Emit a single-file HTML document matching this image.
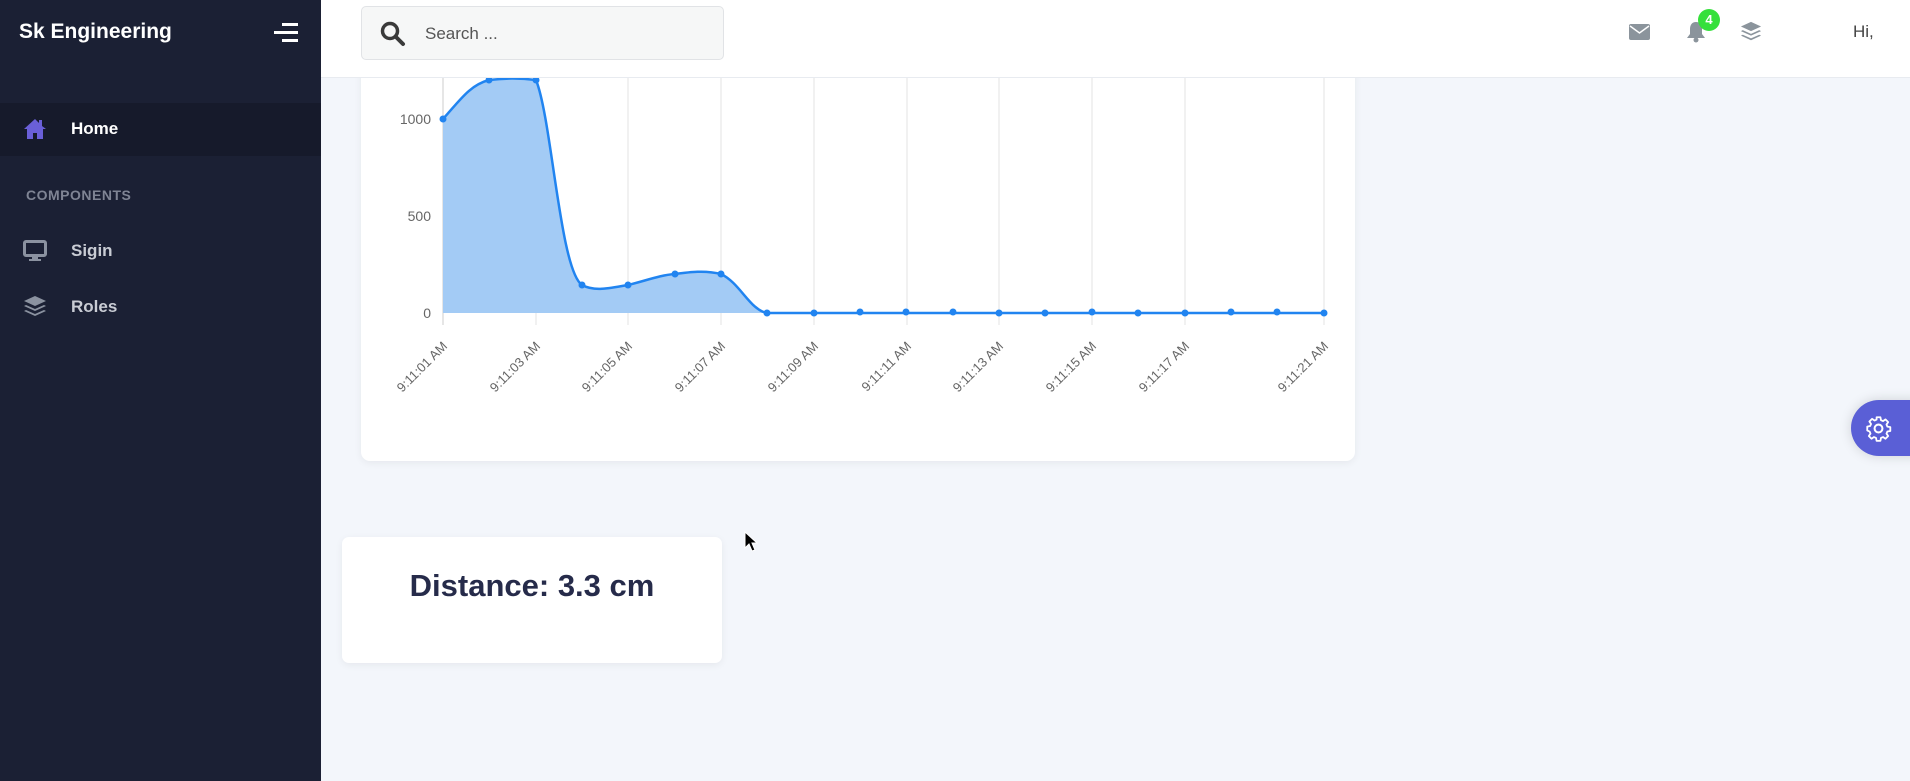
<!DOCTYPE html>
<html><head><meta charset="utf-8"><style>
*{margin:0;padding:0;box-sizing:border-box}
body{width:1910px;height:781px;overflow:hidden;background:#f3f6fb;font-family:"Liberation Sans",sans-serif;position:relative}
.side{position:absolute;left:0;top:0;width:321px;height:781px;background:#1b2034}
.brand{position:absolute;left:19px;top:20px;color:#fff;font-weight:bold;font-size:21px}
.home{position:absolute;left:0;top:103px;width:321px;height:53px;background:#161a2b}
.nav{position:absolute;left:71px;color:#fff;font-weight:bold;font-size:17px}
.nav2{color:#c9ccd4}
.comp{position:absolute;left:26px;top:187px;color:#7f8494;font-size:14px;font-weight:bold;letter-spacing:.5px}
.hdr{position:absolute;left:321px;top:0;width:1589px;height:78px;background:#fff;border-bottom:1px solid #e8ebf0}
.search{position:absolute;left:361px;top:6px;width:363px;height:54px;background:#f6f7f7;border:1px solid #e1e3e6;border-radius:5px}
.search span{position:absolute;left:63px;top:17px;font-size:17px;color:#555}
.card{position:absolute;left:361px;top:40px;width:994px;height:421px;background:#fff;border-radius:9px;box-shadow:0 2px 8px rgba(0,0,0,.06)}
.dist{position:absolute;left:342px;top:537px;width:380px;height:126px;background:#fff;border-radius:7px;box-shadow:0 2px 8px rgba(0,0,0,.06);text-align:center}
.dist div{margin-top:31px;font-size:31px;font-weight:bold;color:#262b4a}
.gear{position:absolute;left:1851px;top:400px;width:70px;height:56px;background:#5a5fd6;border-radius:28px 0 0 28px;box-shadow:0 0 12px rgba(0,0,0,.15)}
</style></head><body>
<div class="side">
<div class="brand">Sk Engineering</div>
<svg style="position:absolute;left:272px;top:22px" width="28" height="22"><rect x="10" y="1" width="16" height="3" fill="#fff"/><rect x="2" y="9" width="24" height="3" fill="#fff"/><rect x="10" y="17" width="16" height="3" fill="#fff"/></svg>
<div class="home"></div>
<svg style="position:absolute;left:23px;top:118px" width="24" height="22" viewBox="0 0 24 22"><path d="M12 1L1 11h3v10h6v-6h4v6h6V11h3L19 8V2h-3v3z" fill="#6a5fd8"/></svg>
<div class="nav" style="top:119px">Home</div>
<div class="comp">COMPONENTS</div>
<svg style="position:absolute;left:23px;top:240px" width="24" height="22" viewBox="0 0 24 22"><rect x="1.5" y="1.5" width="21" height="14" rx="1.5" fill="none" stroke="#8b92a0" stroke-width="3"/><rect x="9" y="16" width="6" height="3" fill="#8b92a0"/><rect x="6" y="19" width="12" height="2" fill="#8b92a0"/></svg>
<div class="nav nav2" style="top:241px">Sigin</div>
<svg style="position:absolute;left:23px;top:295px" width="24" height="24" viewBox="0 0 24 24"><path d="M12 1L1 6l11 5 11-5z" fill="#8b92a0"/><path d="M3 10l-2 1 11 5 11-5-2-1-9 4z" fill="#8b92a0"/><path d="M3 15l-2 1 11 5 11-5-2-1-9 4z" fill="#8b92a0"/></svg>
<div class="nav nav2" style="top:297px">Roles</div>
</div>
<div class="card">
<svg width="994" height="421" style="position:absolute;left:0;top:0" font-family="Liberation Sans,sans-serif">
<g transform="translate(-361,-40)">
<g stroke="#e3e3e3" stroke-width="1">
<line x1="536" y1="78" x2="536" y2="325"/><line x1="628" y1="78" x2="628" y2="325"/><line x1="721" y1="78" x2="721" y2="325"/><line x1="814" y1="78" x2="814" y2="325"/><line x1="907" y1="78" x2="907" y2="325"/><line x1="999" y1="78" x2="999" y2="325"/><line x1="1092" y1="78" x2="1092" y2="325"/><line x1="1185" y1="78" x2="1185" y2="325"/><line x1="1324" y1="78" x2="1324" y2="325"/>
<line x1="443" y1="78" x2="443" y2="325" stroke="#ccc"/>
</g>
<g font-size="14" fill="#666" text-anchor="end"><text x="431" y="124">1000</text><text x="431" y="221">500</text><text x="431" y="318">0</text></g>
<path d="M443,119 C460,100 470,85 489,80 C505,78 520,78 536,80 C552,120 560,270 582,285 C595,292 610,288 628,285 C645,281 660,275 675,274 C690,272 705,270 721,274 C740,283 750,310 767,313 L1324,313 L443,313Z" fill="#a3cbf5"/>
<path d="M443,119 C460,100 470,85 489,80 C505,78 520,78 536,80 C552,120 560,270 582,285 C595,292 610,288 628,285 C645,281 660,275 675,274 C690,272 705,270 721,274 C740,283 750,310 767,313 L1324,313" fill="none" stroke="#2184f0" stroke-width="2.5"/>
<g fill="#2184f0"><circle cx="443" cy="119" r="3.5"/><circle cx="489" cy="80" r="3.5"/><circle cx="536" cy="80" r="3.5"/><circle cx="582" cy="285" r="3.5"/><circle cx="628" cy="285" r="3.5"/><circle cx="675" cy="274" r="3.5"/><circle cx="721" cy="274" r="3.5"/><circle cx="767" cy="313" r="3.5"/><circle cx="814" cy="313" r="3.5"/><circle cx="860" cy="312" r="3.5"/><circle cx="906" cy="312" r="3.5"/><circle cx="953" cy="312" r="3.5"/><circle cx="999" cy="313" r="3.5"/><circle cx="1045" cy="313" r="3.5"/><circle cx="1092" cy="312" r="3.5"/><circle cx="1138" cy="313" r="3.5"/><circle cx="1185" cy="313" r="3.5"/><circle cx="1231" cy="312" r="3.5"/><circle cx="1277" cy="312" r="3.5"/><circle cx="1324" cy="313" r="3.5"/></g>
<g font-size="13" fill="#666" text-anchor="end">
<text transform="translate(448,347) rotate(-45)">9:11:01 AM</text>
<text transform="translate(541,347) rotate(-45)">9:11:03 AM</text>
<text transform="translate(633,347) rotate(-45)">9:11:05 AM</text>
<text transform="translate(726,347) rotate(-45)">9:11:07 AM</text>
<text transform="translate(819,347) rotate(-45)">9:11:09 AM</text>
<text transform="translate(912,347) rotate(-45)">9:11:11 AM</text>
<text transform="translate(1004,347) rotate(-45)">9:11:13 AM</text>
<text transform="translate(1097,347) rotate(-45)">9:11:15 AM</text>
<text transform="translate(1190,347) rotate(-45)">9:11:17 AM</text>
<text transform="translate(1329,347) rotate(-45)">9:11:21 AM</text>
</g></g></svg>
</div>
<div class="hdr"></div>
<div class="search">
<svg style="position:absolute;left:18px;top:14px" width="26" height="26" viewBox="0 0 26 26"><circle cx="10" cy="10" r="7.5" fill="none" stroke="#3a3a3a" stroke-width="3.5"/><path d="M15.5 15.5L23 23" stroke="#3a3a3a" stroke-width="4" stroke-linecap="round"/></svg>
<span>Search ...</span></div>
<svg style="position:absolute;left:1629px;top:24px" width="21" height="16" viewBox="0 0 21 16"><rect width="21" height="16" rx="2" fill="#8b949c"/><path d="M1 2l9.5 7L20 2" fill="none" stroke="#fff" stroke-width="1.5"/></svg>
<svg style="position:absolute;left:1686px;top:21px" width="20" height="22" viewBox="0 0 20 22"><path d="M10 1c-4 0-6 3-6 7v5l-3 4h18l-3-4V8c0-4-2-7-6-7z" fill="#8b949c"/><circle cx="10" cy="19" r="2.5" fill="#8b949c"/></svg>
<div style="position:absolute;left:1698px;top:9px;width:22px;height:22px;border-radius:50%;background:#35e03b;color:#fff;font-size:13px;font-weight:bold;text-align:center;line-height:22px">4</div>
<svg style="position:absolute;left:1740px;top:21px" width="22" height="22" viewBox="0 0 24 24"><path d="M12 1L1 6l11 5 11-5z" fill="#8b949c"/><path d="M3 10l-2 1 11 5 11-5-2-1-9 4z" fill="#8b949c"/><path d="M3 15l-2 1 11 5 11-5-2-1-9 4z" fill="#8b949c"/></svg>
<div style="position:absolute;left:1853px;top:22px;font-size:17px;color:#444">Hi,</div>
<div class="dist"><div>Distance: 3.3 cm</div></div>
<div class="gear"><svg style="position:absolute;left:14px;top:15px" width="27" height="27" viewBox="0 0 24 24"><path d="M10.3 2h3.4l.5 2.6 1.8.8 2.2-1.5 2.4 2.4-1.5 2.2.8 1.8 2.6.5v3.4l-2.6.5-.8 1.8 1.5 2.2-2.4 2.4-2.2-1.5-1.8.8-.5 2.6h-3.4l-.5-2.6-1.8-.8-2.2 1.5-2.4-2.4 1.5-2.2-.8-1.8L2 13.7v-3.4l2.6-.5.8-1.8-1.5-2.2 2.4-2.4 2.2 1.5 1.8-.8z" fill="none" stroke="#fff" stroke-width="1.6" stroke-linejoin="round"/><circle cx="12" cy="12" r="3.5" fill="none" stroke="#fff" stroke-width="1.8"/></svg></div>
<svg style="position:absolute;left:744px;top:531px" width="14" height="22" viewBox="0 0 14 22"><path d="M1 1v16l4-4 3 7 3-1-3-7h5z" fill="#000" stroke="#fff" stroke-width="1"/></svg>
</body></html>
